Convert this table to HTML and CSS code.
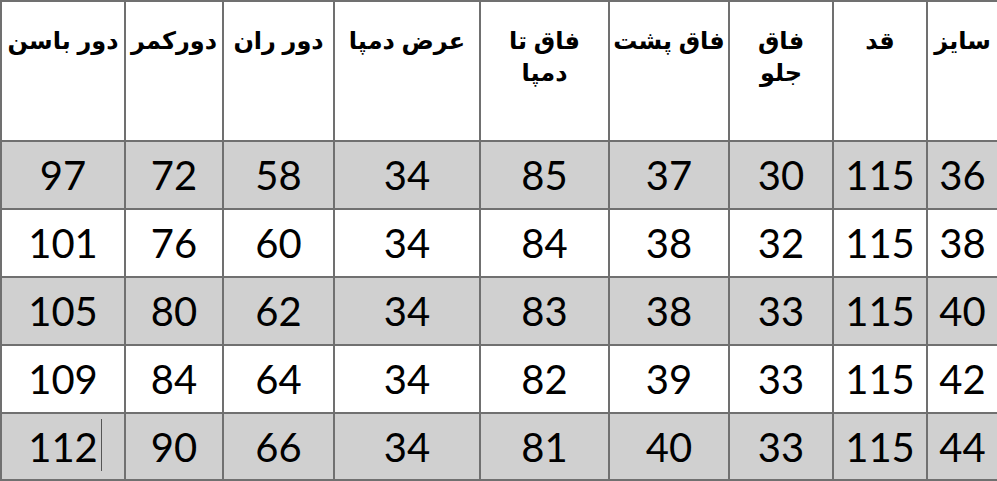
FILE: index.html
```html
<!DOCTYPE html>
<html lang="fa">
<head>
<meta charset="utf-8">
<title>جدول سایز</title>
<link rel="stylesheet" href="styles.css">
</head>
<body>
<table class="sizes" dir="rtl">
  <colgroup>
    <col class="c1"><col class="c2"><col class="c3"><col class="c4"><col class="c5"><col class="c6"><col class="c7"><col class="c8"><col class="c9">
  </colgroup>
  <thead>
    <tr class="head">
      <th>سایز</th>
      <th>قد</th>
      <th>فاق<br>جلو</th>
      <th>فاق پشت</th>
      <th>فاق تا<br>دمپا</th>
      <th>عرض دمپا</th>
      <th>دور ران</th>
      <th>دورکمر</th>
      <th>دور باسن</th>
    </tr>
  </thead>
  <tbody>
    <tr class="shade"><td>36</td><td>115</td><td>30</td><td>37</td><td>85</td><td>34</td><td>58</td><td>72</td><td>97</td></tr>
    <tr><td>38</td><td>115</td><td>32</td><td>38</td><td>84</td><td>34</td><td>60</td><td>76</td><td>101</td></tr>
    <tr class="shade"><td>40</td><td>115</td><td>33</td><td>38</td><td>83</td><td>34</td><td>62</td><td>80</td><td>105</td></tr>
    <tr><td>42</td><td>115</td><td>33</td><td>39</td><td>82</td><td>34</td><td>64</td><td>84</td><td>109</td></tr>
    <tr class="shade last"><td>44</td><td>115</td><td>33</td><td>40</td><td>81</td><td>34</td><td>66</td><td>90</td><td><span class="editing">112</span></td></tr>
  </tbody>
</table>
</body>
</html>
```
FILE: styles.css
```css
html, body {
  margin: 0;
  padding: 0;
  background: #ffffff;
}

.sizes {
  margin: 0;
  border-collapse: collapse;
  table-layout: fixed;
  width: 997px;
  color: #000;
}

.c1 { width: 71px; }
.c2 { width: 94px; }
.c3 { width: 104px; }
.c4 { width: 120px; }
.c5 { width: 129px; }
.c6 { width: 146px; }
.c7 { width: 111px; }
.c8 { width: 98px; }
.c9 { width: 124px; }

.sizes th,
.sizes td {
  border: 2px solid #707070;
  padding: 0;
  text-align: center;
}

.sizes th {
  height: 140px;
  vertical-align: top;
  padding-top: 23px;
  font-family: "Liberation Sans", "DejaVu Sans", sans-serif;
  font-weight: bold;
  font-size: 24px;
  line-height: 32px;
  box-sizing: border-box;
}

.sizes td {
  height: 68px;
  box-sizing: border-box;
  vertical-align: middle;
  font-family: Lato, "Open Sans", sans-serif;
  font-size: 40px;
  line-height: 40px;
}

.sizes tr.last td { height: 67px; }

.shade td { background: #d0d0d0; }

.editing {
  position: relative;
}

.editing::after {
  content: "";
  position: absolute;
  right: -4px;
  top: -4px;
  width: 1px;
  height: 52px;
  background: #555;
}
```
